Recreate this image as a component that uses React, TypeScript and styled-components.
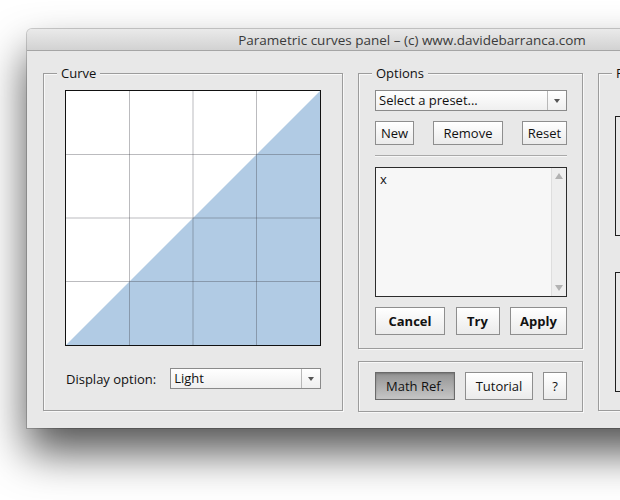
import React from "react";
import styled, { createGlobalStyle } from "styled-components";

const GlobalStyle = createGlobalStyle`
  html, body {
    margin: 0;
    padding: 0;
    background: #fff;
    overflow: hidden;
  }
  body {
    font-family: "Open Sans", "Liberation Sans", Arial, sans-serif;
    font-size: 13px;
    color: #111;
  }
`;

const Stage = styled.div`
  width: 620px;
  height: 500px;
  overflow: hidden;
  box-sizing: border-box;
  padding: 29px 0 0 27px;
`;

const Window = styled.div`
  width: 770px;
  background: #e8e8e8;
  border-radius: 5px 5px 0 0;
  box-shadow: 0 24px 44px rgba(0, 0, 0, 0.68), 0 0 0 1px rgba(0, 0, 0, 0.18);
`;

const TitleBar = styled.div`
  height: 21px;
  display: flex;
  align-items: center;
  justify-content: center;
  background: linear-gradient(#eaeaea, #d2d2d2);
  border-bottom: 1px solid #a5a5a5;
  border-radius: 5px 5px 0 0;
  font-size: 13.5px;
  color: #3a3a3a;
`;

const Body = styled.div`
  display: flex;
  align-items: flex-start;
  padding: 22px 0 16px 16px;
`;

const Group = styled.div<{ $w: number; $h: number }>`
  position: relative;
  box-sizing: border-box;
  width: ${(p) => p.$w}px;
  height: ${(p) => p.$h}px;
  border: 1px solid #9c9c9c;
  box-shadow: inset 1px 1px 0 #f8f8f8, 1px 1px 0 #f8f8f8;
  flex-shrink: 0;
`;

const GroupTitle = styled.span`
  position: absolute;
  top: -10px;
  left: 13px;
  padding: 0 4px;
  line-height: 18px;
  background: #e8e8e8;
  color: #111;
`;

const CurveContent = styled.div`
  display: flex;
  flex-direction: column;
  padding: 16px 0 0 21px;
`;

const Canvas = styled.div`
  width: 254px;
  height: 254px;
  border: 1px solid #111;
  background: #fff;

  svg {
    display: block;
  }
`;

const DisplayRow = styled.div`
  display: flex;
  align-items: center;
  gap: 14px;
  margin-top: 22px;
  padding-left: 1px;
`;

const Select = styled.div<{ $w: number }>`
  box-sizing: border-box;
  width: ${(p) => p.$w}px;
  height: 21px;
  display: flex;
  border: 1px solid #8a8a8a;
  background: linear-gradient(#ffffff, #efefef);
`;

const SelectText = styled.span`
  flex: 1;
  padding-left: 3px;
  line-height: 19px;
`;

const SelectArrow = styled.span`
  width: 18px;
  display: flex;
  align-items: center;
  justify-content: center;
  border-left: 1px solid #b8b8b8;

  &::after {
    content: "";
    border-left: 3.5px solid transparent;
    border-right: 3.5px solid transparent;
    border-top: 4px solid #555;
  }
`;

const Column = styled.div`
  display: flex;
  flex-direction: column;
  gap: 12px;
  margin-left: 15px;
`;

const Stack = styled.div<{ $top?: number }>`
  display: flex;
  flex-direction: column;
  padding: ${(p) => p.$top ?? 16}px 15px 0 16px;
`;

const ButtonRow = styled.div<{ $gap?: number; $top?: number }>`
  display: flex;
  justify-content: ${(p) => (p.$gap ? "flex-start" : "space-between")};
  gap: ${(p) => p.$gap || 0}px;
  margin-top: ${(p) => p.$top || 0}px;
`;

const Button = styled.button<{ $w: number; $h: number; $bold?: boolean; $pressed?: boolean }>`
  box-sizing: border-box;
  width: ${(p) => p.$w}px;
  height: ${(p) => p.$h}px;
  padding: 0;
  font-family: inherit;
  font-size: 13px;
  font-weight: ${(p) => (p.$bold ? 700 : 400)};
  color: #111;
  border: 1px solid ${(p) => (p.$pressed ? "#6a6a6a" : "#8e8e8e")};
  border-radius: 0;
  background: ${(p) =>
    p.$pressed
      ? "linear-gradient(#939393, #c6c6c6)"
      : "linear-gradient(#ffffff, #ebebeb)"};
  box-shadow: ${(p) => (p.$pressed ? "inset 0 1px 2px rgba(0,0,0,0.2)" : "inset 0 1px 0 #fff")};
`;

const Separator = styled.div`
  height: 1px;
  margin-top: 10px;
  background: #a9a9a9;
  box-shadow: 0 1px 0 #f7f7f7;
`;

const ListBox = styled.div`
  box-sizing: border-box;
  height: 130px;
  margin-top: 11px;
  display: flex;
  border: 1px solid #2c2c2c;
  background: #f7f7f7;
`;

const ListItems = styled.div`
  flex: 1;
  padding: 2px 4px;
  line-height: 18px;
`;

const ScrollBar = styled.div`
  width: 14px;
  display: flex;
  flex-direction: column;
  justify-content: space-between;
  align-items: center;
  padding: 5px 0;
  background: #eeeeee;
  border-left: 1px solid #dedede;
`;

const ScrollArrow = styled.span<{ $up?: boolean }>`
  border-left: 4px solid transparent;
  border-right: 4px solid transparent;
  ${(p) => (p.$up ? "border-bottom: 6px solid #b2b2b2;" : "border-top: 6px solid #b2b2b2;")}
`;

const PreviewContent = styled.div`
  display: flex;
  flex-direction: column;
  gap: 36px;
  padding: 42px 0 0 16px;
`;

const PreviewBox = styled.div`
  box-sizing: border-box;
  width: 160px;
  height: 120px;
  border: 1px solid #1e1e1e;
`;

const gridLines = [63.5, 127, 190.5];

const CurveChart = () => (
  <svg width={254} height={254} viewBox="0 0 254 254">
    <polygon points="0,254 254,0 254,254" fill="#b1cbe4" />
    {gridLines.map((v) => (
      <g key={v} stroke="rgba(60,60,70,0.35)" strokeWidth={1}>
        <line x1={v} y1={0} x2={v} y2={254} />
        <line x1={0} y1={v} x2={254} y2={v} />
      </g>
    ))}
  </svg>
);

export default function App() {
  return (
    <Stage>
      <GlobalStyle />
      <Window>
        <TitleBar>Parametric curves panel – (c) www.davidebarranca.com</TitleBar>
        <Body>
          <Group $w={300} $h={338}>
            <GroupTitle>Curve</GroupTitle>
            <CurveContent>
              <Canvas>
                <CurveChart />
              </Canvas>
              <DisplayRow>
                <span>Display option:</span>
                <Select $w={151}>
                  <SelectText>Light</SelectText>
                  <SelectArrow />
                </Select>
              </DisplayRow>
            </CurveContent>
          </Group>

          <Column>
            <Group $w={225} $h={276}>
              <GroupTitle>Options</GroupTitle>
              <Stack>
                <Select $w={192}>
                  <SelectText>Select a preset...</SelectText>
                  <SelectArrow />
                </Select>
                <ButtonRow $top={10}>
                  <Button $w={39} $h={24}>New</Button>
                  <Button $w={70} $h={24}>Remove</Button>
                  <Button $w={45} $h={24}>Reset</Button>
                </ButtonRow>
                <Separator />
                <ListBox>
                  <ListItems>x</ListItems>
                  <ScrollBar>
                    <ScrollArrow $up />
                    <ScrollArrow />
                  </ScrollBar>
                </ListBox>
                <ButtonRow $top={10}>
                  <Button $w={70} $h={28} $bold>Cancel</Button>
                  <Button $w={44} $h={28} $bold>Try</Button>
                  <Button $w={57} $h={28} $bold>Apply</Button>
                </ButtonRow>
              </Stack>
            </Group>
            <Group $w={225} $h={51}>
              <Stack $top={10}>
                <ButtonRow $gap={10}>
                  <Button $w={80} $h={28} $pressed>Math Ref.</Button>
                  <Button $w={68} $h={28}>Tutorial</Button>
                  <Button $w={24} $h={28}>?</Button>
                </ButtonRow>
              </Stack>
            </Group>
          </Column>

          <Column>
            <Group $w={170} $h={338}>
              <GroupTitle>Preview</GroupTitle>
              <PreviewContent>
                <PreviewBox />
                <PreviewBox />
              </PreviewContent>
            </Group>
          </Column>
        </Body>
      </Window>
    </Stage>
  );
}
